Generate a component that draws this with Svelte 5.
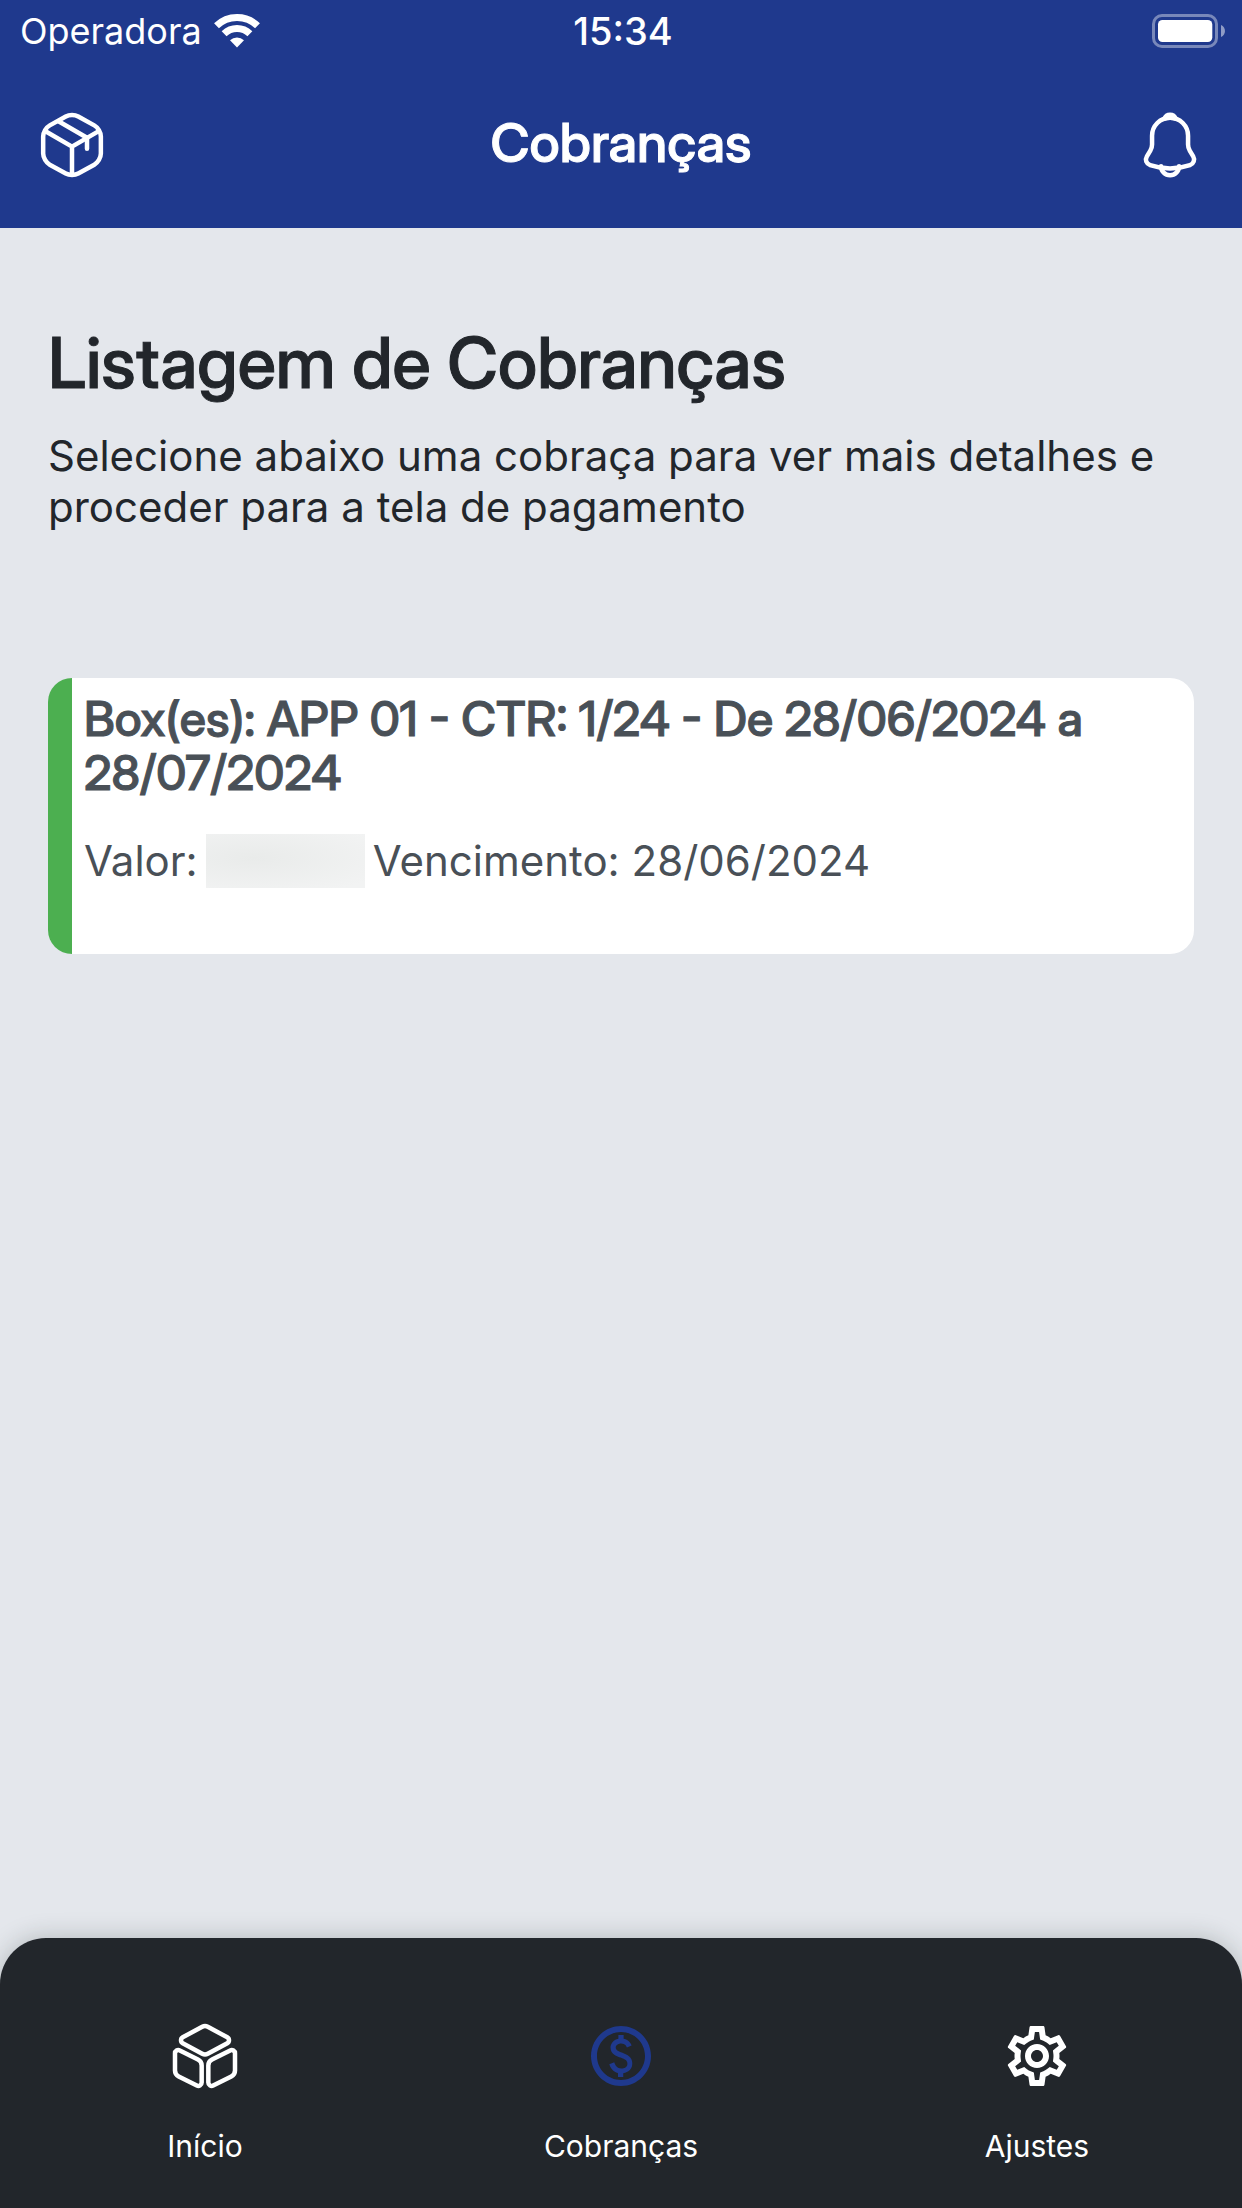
<script lang="ts">
  type Charge = {
    title: string;
    due: string;
  };

  const charges: Charge[] = [
    {
      title: "Box(es): APP 01 - CTR: 1/24 - De 28/06/2024 a 28/07/2024",
      due: "28/06/2024",
    },
  ];

  const tabs = [
    { id: "home", label: "Início" },
    { id: "charges", label: "Cobranças" },
    { id: "settings", label: "Ajustes" },
  ];

  let current = "charges";
</script>

<div class="app">
  <header>
    <div class="status">
      <div class="carrier">
        <span>Operadora</span>
        <svg width="46" height="34" viewBox="0 0 46 34" aria-hidden="true">
          <g fill="none" stroke="#fff" stroke-width="7">
            <path d="M2.5 11.8A29.5 29.5 0 0 1 43.5 11.8" />
            <path d="M10.1 19.7A18.5 18.5 0 0 1 35.9 19.7" />
          </g>
          <path d="M23 33.4 16 26.2A10.5 10.5 0 0 1 30 26.2Z" fill="#fff" />
        </svg>
      </div>
      <span class="time">15:34</span>
      <svg
        class="battery"
        width="74"
        height="34"
        viewBox="0 0 74 34"
        aria-hidden="true"
      >
        <rect
          x="1.5"
          y="1.5"
          width="63"
          height="31"
          rx="8.5"
          fill="none"
          stroke="#fff"
          stroke-opacity="0.4"
          stroke-width="3"
        />
        <rect x="6" y="6" width="54.3" height="22" rx="4.5" fill="#fff" />
        <path d="M69 11C74.3 13 74.3 21 69 23Z" fill="#fff" fill-opacity="0.5" />
      </svg>
    </div>

    <div class="toolbar">
      <button type="button" class="icon-button" aria-label="Boxes">
        <svg class="icon line" viewBox="0 0 24 24">
          <path d="M3.17 7.44 12 12.55l8.77-5.08M12 21.61v-9.07" />
          <path
            d="M9.93 2.48 4.59 5.45c-1.21.67-2.2 2.35-2.2 3.73v5.65c0 1.38.99 3.06 2.2 3.73l5.34 2.97c1.14.63 3.01.63 4.15 0l5.34-2.97c1.21-.67 2.2-2.35 2.2-3.73V9.18c0-1.38-.99-3.06-2.2-3.73l-5.34-2.97c-1.15-.64-3.01-.64-4.15 0Z"
          />
          <path d="M17 13.24V9.58L7.51 4.1" />
        </svg>
      </button>
      <h1>Cobranças</h1>
      <button type="button" class="icon-button" aria-label="Notificações">
        <svg class="icon line" viewBox="0 0 24 24">
          <path
            d="M12.02 2.91c-3.31 0-6 2.69-6 6v2.89c0 .61-.26 1.54-.57 2.06L4.3 15.77c-.71 1.18-.22 2.49 1.08 2.93 4.31 1.44 8.96 1.44 13.27 0 1.21-.4 1.74-1.83 1.08-2.93l-1.15-1.91c-.3-.52-.56-1.45-.56-2.06V8.91c0-3.3-2.7-6-6-6Z"
          />
          <path
            d="M13.87 3.2c-.31-.09-.63-.16-.96-.2-.96-.12-1.88-.05-2.74.2.29-.74 1.01-1.26 1.85-1.26.84 0 1.56.52 1.85 1.26Z"
          />
          <path
            d="M15.02 19.06c0 1.65-1.35 3-3 3-.82 0-1.58-.34-2.12-.88-.54-.54-.88-1.3-.88-2.12"
          />
        </svg>
      </button>
    </div>
  </header>

  <main>
    <h2>Listagem de Cobranças</h2>
    <p class="intro">
      Selecione abaixo uma cobraça para ver mais detalhes e proceder para a tela
      de pagamento
    </p>

    <div class="charges">
      {#each charges as charge}
        <button type="button" class="card">
          <strong>{charge.title}</strong>
          <span class="details">
            <span>Valor:</span>
            <span class="hidden-value"></span>
            <span>Vencimento: {charge.due}</span>
          </span>
        </button>
      {/each}
    </div>
  </main>

  <nav>
    {#each tabs as tab}
      <button
        type="button"
        class="tab"
        class:active={current === tab.id}
        on:click={() => (current = tab.id)}
      >
        {#if tab.id === "home"}
          <svg class="icon line" viewBox="0 0 24 24" aria-hidden="true">
            <path
              d="M12.92 2.26l6.51 3.51c.76.41.76 1.58 0 1.99l-6.51 3.51c-.58.31-1.26.31-1.84 0L4.57 7.76c-.76-.41-.76-1.58 0-1.99l6.51-3.51c.58-.31 1.26-.31 1.84 0Z"
            />
            <path
              d="M3.61 10.13l6.05 3.03c.75.38 1.23 1.15 1.23 1.99v5.72c0 .83-.87 1.36-1.61.99l-6.05-3.03C2.48 18.45 2 17.68 2 16.84v-5.72c0-.83.87-1.36 1.61-.99Z"
            />
            <path
              d="M20.39 10.13l-6.05 3.03c-.75.38-1.23 1.15-1.23 1.99v5.72c0 .83.87 1.36 1.61.99l6.05-3.03c.75-.38 1.23-1.15 1.23-1.99v-5.72c0-.83-.87-1.36-1.61-.99Z"
            />
          </svg>
        {:else if tab.id === "charges"}
          <svg class="icon" viewBox="0 0 24 24" aria-hidden="true">
            <path
              d="M12 2C6.48 2 2 6.48 2 12s4.48 10 10 10 10-4.48 10-10S17.52 2 12 2zm0 18c-4.41 0-8-3.59-8-8s3.59-8 8-8 8 3.59 8 8-3.59 8-8 8zm.89-8.9c-1.78-.59-2.64-.96-2.64-1.9 0-1.02 1.11-1.39 1.81-1.39 1.31 0 1.79.99 1.9 1.34l1.58-.67c-.15-.44-.82-1.91-2.66-2.23V5h-1.75v1.26c-2.6.56-2.62 2.85-2.62 2.96 0 2.27 2.25 2.91 3.35 3.31 1.58.56 2.28 1.07 2.28 2.03 0 1.13-1.05 1.61-1.98 1.61-1.82 0-2.34-1.87-2.4-2.09l-1.66.67c.63 2.19 2.28 2.78 2.9 2.96V19h1.75v-1.24c.52-.09 3.02-.59 3.02-3.22.01-1.39-.6-2.61-3-3.44z"
            />
          </svg>
        {:else}
          <svg class="icon" viewBox="0 0 24 24" aria-hidden="true">
            <path
              d="M19.43 12.98c.04-.32.07-.64.07-.98 0-.34-.03-.66-.07-.98l2.11-1.65c.19-.15.24-.42.12-.64l-2-3.46c-.09-.16-.26-.25-.44-.25-.06 0-.12.01-.17.03l-2.49 1c-.52-.4-1.08-.73-1.69-.98l-.38-2.65C14.46 2.18 14.25 2 14 2h-4c-.25 0-.46.18-.49.42l-.38 2.65c-.61.25-1.17.59-1.69.98l-2.49-1c-.06-.02-.12-.03-.18-.03-.17 0-.34.09-.43.25l-2 3.46c-.13.22-.07.49.12.64l2.11 1.65c-.04.32-.07.65-.07.98 0 .33.03.66.07.98l-2.11 1.65c-.19.15-.24.42-.12.64l2 3.46c.09.16.26.25.44.25.06 0 .12-.01.17-.03l2.49-1c.52.4 1.08.73 1.69.98l.38 2.65c.03.24.24.42.49.42h4c.25 0 .46-.18.49-.42l.38-2.65c.61-.25 1.17-.59 1.69-.98l2.49 1c.06.02.12.03.18.03.17 0 .34-.09.43-.25l2-3.46c.12-.22.07-.49-.12-.64l-2.11-1.65zm-1.98-1.71c.04.31.05.52.05.73 0 .21-.02.43-.05.73l-.14 1.13.89.7 1.08.84-.7 1.21-1.27-.51-1.04-.42-.9.68c-.43.32-.84.56-1.25.73l-1.06.43-.16 1.13-.2 1.35h-1.4l-.19-1.35-.16-1.13-1.06-.43c-.43-.18-.83-.41-1.23-.71l-.91-.7-1.06.43-1.27.51-.7-1.21 1.08-.84.89-.7-.14-1.13c-.03-.31-.05-.54-.05-.74s.02-.43.05-.73l.14-1.13-.89-.7-1.08-.84.7-1.21 1.27.51 1.04.42.9-.68c.43-.32.84-.56 1.25-.73l1.06-.43.16-1.13.2-1.35h1.39l.19 1.35.16 1.13 1.06.43c.43.18.83.41 1.23.71l.91.7 1.06-.43 1.27-.51.7 1.21-1.07.85-.89.7.14 1.13zM12 8c-2.21 0-4 1.79-4 4s1.79 4 4 4 4-1.79 4-4-1.79-4-4-4zm0 6c-1.1 0-2-.9-2-2s.9-2 2-2 2 .9 2 2-.9 2-2 2z"
            />
          </svg>
        {/if}
        <span>{tab.label}</span>
      </button>
    {/each}
  </nav>
</div>

<style>
  :global(body) {
    margin: 0;
    background-color: #e4e7ec;
  }

  .app {
    display: flex;
    flex-direction: column;
    min-height: 100vh;
    font-family: Inter, "Liberation Sans", sans-serif;
    font-weight: 400;
    color: #22262b;
  }

  button {
    margin: 0;
    padding: 0;
    border: none;
    background: none;
    font: inherit;
    color: inherit;
    cursor: pointer;
  }

  svg {
    display: block;
    flex: none;
  }

  header {
    background-color: #1f398d;
    color: #fff;
  }

  .status {
    display: grid;
    grid-template-columns: 1fr auto 1fr;
    align-items: center;
    height: 62px;
    padding: 0 16px 0 20px;
    font-size: 36px;
    line-height: 62px;
  }

  .carrier {
    display: flex;
    align-items: center;
    gap: 12px;
  }

  .time {
    font-size: 38px;
    font-weight: 500;
  }

  .battery {
    justify-self: end;
  }

  .toolbar {
    display: flex;
    align-items: center;
    justify-content: space-between;
    height: 166px;
    padding: 0 36px;
  }

  .icon {
    width: 72px;
    height: 72px;
    fill: currentColor;
  }

  .line {
    fill: none;
    stroke: currentColor;
    stroke-width: 1.5;
    stroke-linecap: round;
    stroke-linejoin: round;
  }

  h1,
  h2,
  .card strong {
    margin: 0;
    font-family: "Inter Display", Inter, "Liberation Sans", sans-serif;
    font-weight: 500;
    font-variation-settings: "opsz" 32;
    -webkit-text-stroke: 1px currentColor;
  }

  h1 {
    padding-bottom: 4px;
    font-size: 54px;
    line-height: 64px;
  }

  main {
    flex: 1;
    padding: 93px 48px 48px;
  }

  h2 {
    font-size: 70px;
    line-height: 84px;
  }

  .intro {
    margin: 25px 0 0;
    font-size: 42px;
    line-height: 51px;
  }

  .charges {
    display: flex;
    flex-direction: column;
    gap: 24px;
    margin-top: 146px;
  }

  .card {
    display: block;
    width: 100%;
    min-height: 276px;
    padding: 14px 24px 66px 12px;
    border-left: 24px solid #4caf50;
    border-radius: 24px;
    background-color: #fff;
    color: #495057;
    text-align: left;
  }

  .card strong {
    display: block;
    font-size: 48px;
    line-height: 54px;
  }

  .details {
    display: flex;
    align-items: center;
    gap: 8px;
    margin-top: 34px;
    font-size: 42px;
    line-height: 54px;
  }

  .hidden-value {
    width: 159px;
    height: 54px;
    background: radial-gradient(ellipse at 30% 45%, #e9ebea, #f2f3f3 90%);
  }

  nav {
    display: flex;
    justify-content: space-between;
    box-sizing: border-box;
    height: 270px;
    padding: 82px 125px 0;
    border-radius: 46px 46px 0 0;
    background-color: #22262b;
    box-shadow: 0 0 24px rgba(33, 43, 41, 0.25);
    color: #fff;
  }

  .tab {
    display: flex;
    flex-direction: column;
    align-items: center;
    gap: 36px;
    width: 160px;
    font-size: 30px;
    line-height: 36px;
  }

  .active .icon {
    color: #1f398d;
  }
</style>
